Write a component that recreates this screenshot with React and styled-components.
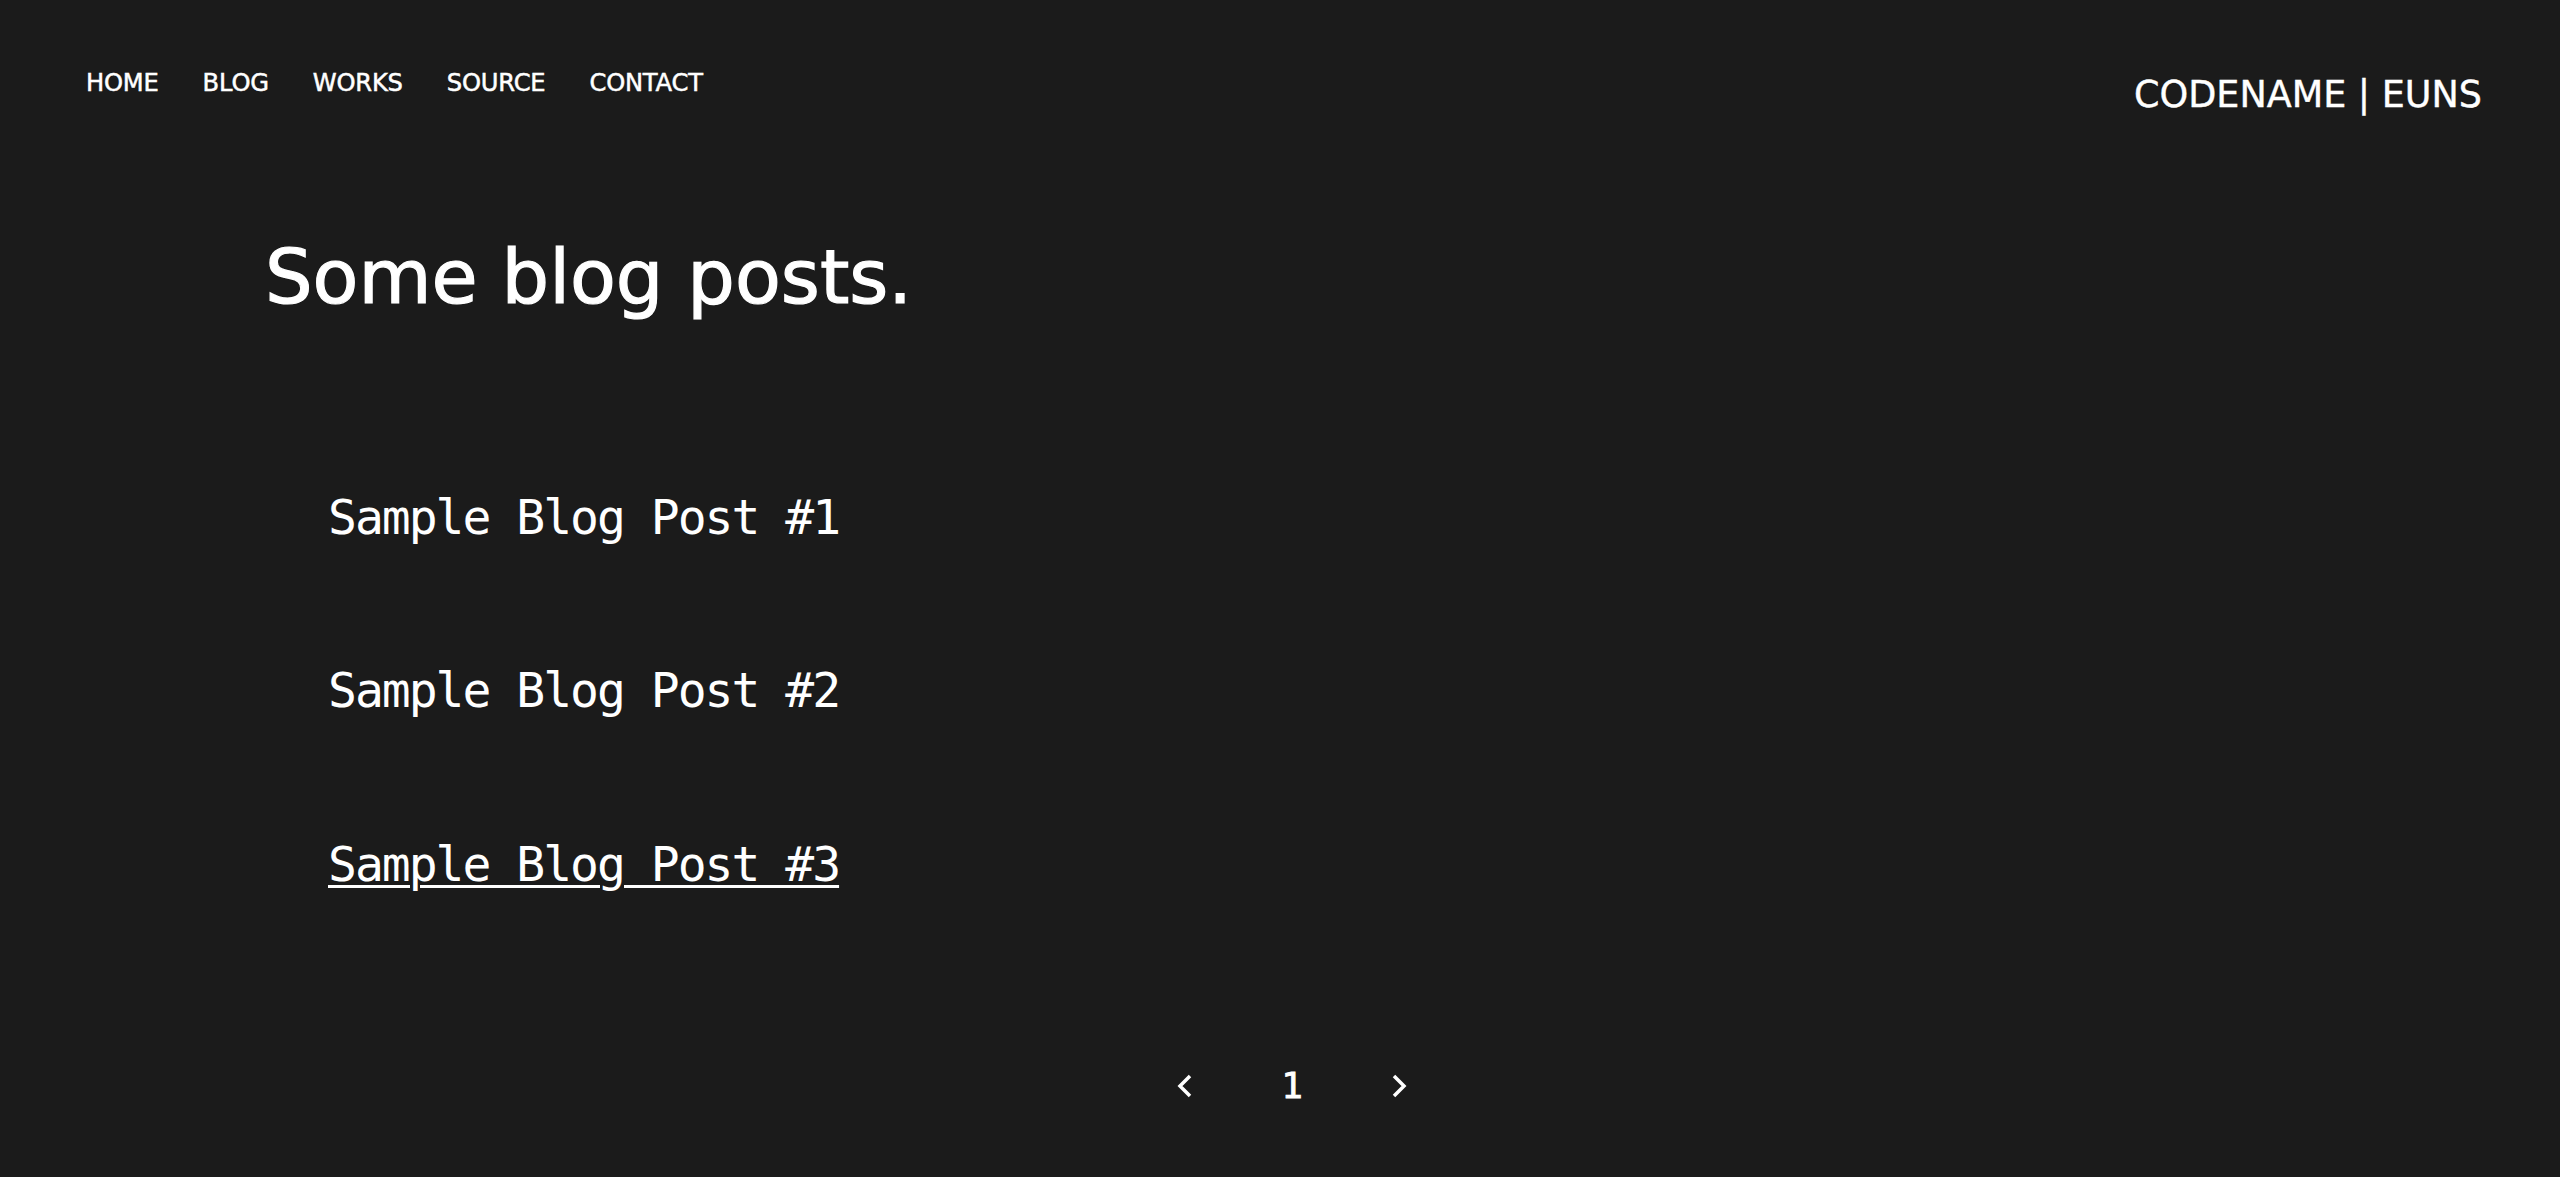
import React from "react";
import styled, { createGlobalStyle } from "styled-components";

const GlobalStyle = createGlobalStyle`
  html, body {
    margin: 0;
    padding: 0;
    background: #1b1b1b;
    color: #ffffff;
  }
  body {
    min-height: 100vh;
    font-family: "DejaVu Sans", "Noto Sans", sans-serif;
  }
`;

const Page = styled.div`
  min-height: 100vh;
  background: #1b1b1b;
`;

const Header = styled.header`
  display: flex;
  justify-content: space-between;
  align-items: flex-start;
  padding: 71px 78px 0 86px;
`;

const Nav = styled.nav`
  display: flex;
  gap: 44px;
`;

const NavLink = styled.a`
  font-family: "DejaVu Sans", sans-serif;
  font-size: 24.2px;
  line-height: 1;
  color: #ffffff;
  text-decoration: none;
  letter-spacing: -0.2px;
  -webkit-text-stroke: 0.5px #ffffff;
`;

const Brand = styled.div`
  margin-top: 6px;
  font-family: "DejaVu Sans", sans-serif;
  font-size: 36.5px;
  line-height: 1;
  color: #ffffff;
  -webkit-text-stroke: 0.4px #ffffff;
`;

const Main = styled.main`
  padding-left: 265px;
`;

const Title = styled.h1`
  margin: 126px 0 0;
  font-family: "DejaVu Sans", sans-serif;
  font-weight: normal;
  font-size: 75px;
  line-height: 1;
  -webkit-text-stroke: 1.2px #ffffff;
`;

const PostList = styled.ul`
  list-style: none;
  margin: 178px 0 0;
  padding: 0 0 0 63px;
  display: flex;
  flex-direction: column;
  gap: 125.5px;
`;

const PostLink = styled.a`
  display: inline-block;
  font-family: "DejaVu Sans Mono", "Liberation Mono", monospace;
  font-size: 48px;
  line-height: 1;
  letter-spacing: -2px;
  color: #ffffff;
  text-decoration: ${(p) => (p.$active ? "underline" : "none")};
  text-decoration-thickness: 3px;
  text-underline-offset: 4px;
`;

const Pager = styled.div`
  display: flex;
  justify-content: center;
  align-items: center;
  gap: 88px;
  margin-top: 180px;
  padding-left: 24px;
  padding-bottom: 40px;
`;

const PageNum = styled.span`
  font-family: "DejaVu Sans Mono", monospace;
  font-size: 36px;
  line-height: 1;
  color: #ffffff;
  -webkit-text-stroke: 0.8px #ffffff;
`;

const Arrow = styled.svg`
  width: 16px;
  height: 24px;
  display: block;
`;

const Chevron = ({ dir }) => (
  <Arrow viewBox="0 0 16 24">
    <polyline
      points={dir === "left" ? "13,2 3,12 13,22" : "3,2 13,12 3,22"}
      fill="none"
      stroke="#ffffff"
      strokeWidth="3.5"
    />
  </Arrow>
);

const links = ["HOME", "BLOG", "WORKS", "SOURCE", "CONTACT"];
const posts = ["Sample Blog Post #1", "Sample Blog Post #2", "Sample Blog Post #3"];

export default function App() {
  return (
    <Page>
      <GlobalStyle />
      <Header>
        <Nav>
          {links.map((l) => (
            <NavLink key={l} href="#">
              {l}
            </NavLink>
          ))}
        </Nav>
        <Brand>CODENAME | EUNS</Brand>
      </Header>
      <Main>
        <Title>Some blog posts.</Title>
        <PostList>
          {posts.map((p, i) => (
            <li key={p}>
              <PostLink href="#" $active={i === 2}>
                {p}
              </PostLink>
            </li>
          ))}
        </PostList>
      </Main>
      <Pager>
        <Chevron dir="left" />
        <PageNum>1</PageNum>
        <Chevron dir="right" />
      </Pager>
    </Page>
  );
}
